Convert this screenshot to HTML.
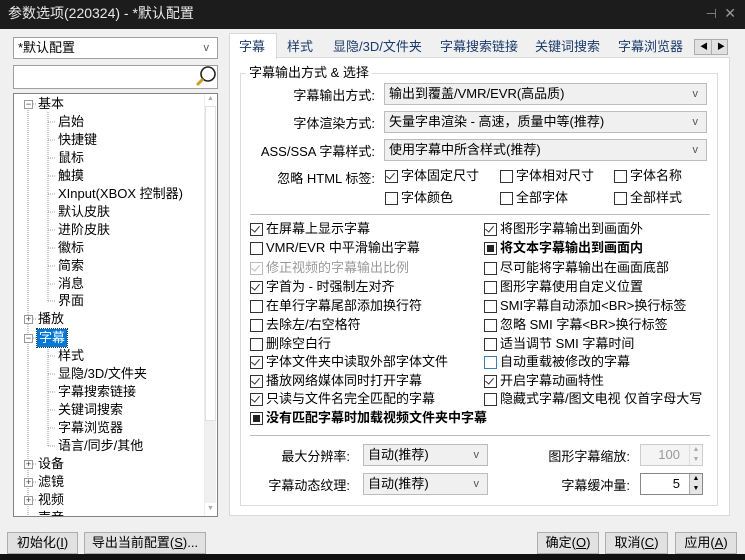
<!DOCTYPE html>
<html><head><meta charset="utf-8"><style>
*{box-sizing:border-box;margin:0;padding:0}
body{width:745px;height:560px;overflow:hidden;background:#f0f0f0;font-family:"Liberation Sans","Microsoft YaHei","Noto Sans CJK SC",sans-serif;font-size:13px;color:#000;position:relative}
.a{position:absolute;white-space:nowrap}
.title{left:0;top:0;width:745px;height:29px;background:#1c1c1c;color:#e8e8e8;font-size:14px;line-height:27px;padding-left:8px}
.combo{position:absolute;background:#fff;border:1px solid #a0a0a0;height:22px;line-height:20px;padding-left:4px}
.combo.g{background:#f0f0f0;border-color:#bcbcbc}
.combo .v{position:absolute;right:8px;top:0;font-size:11px;color:#555}
.tree{left:13px;top:93px;width:205px;height:424px;background:#fff;border:1px solid #828282;overflow:hidden}
.ti{position:absolute;line-height:18px;height:18px}
.btn{position:absolute;border:1px solid #adadad;background:#e1e1e1;height:22px;line-height:20px;text-align:center;font-size:13px}
.cb{position:absolute;line-height:19px;height:19px;padding-left:16px}
.cb:before{content:"";position:absolute;left:0;top:4px;width:11px;height:11px;border:1px solid #333;background:#fff}
.cb.c:after{content:"";position:absolute;left:3px;top:5px;width:4px;height:7px;border:solid #333;border-width:0 1.5px 1.5px 0;transform:rotate(40deg)}
.cb.s:after{content:"";position:absolute;left:3px;top:7px;width:7px;height:7px;background:#222}
.cb.b{font-weight:bold}
.cb.d{color:#999}.cb.d:before{border-color:#bbb}.cb.d:after{border-color:#bbb}
.cb.bl:before{border-color:#3c7fb1}
.tab{position:absolute;top:37px;height:20px;line-height:20px;color:#1a3a6a}
.ex{position:absolute;width:9px;height:9px;border:1px solid #999;background:#fff;font-size:9px;line-height:7px;text-align:center;color:#333}
</style></head><body>
<div class="a title">参数选项(220324) - *默认配置</div>
<div class="a" style="right:28px;top:6px;color:#888;font-size:13px">⊣</div>
<div class="a" style="right:9px;top:5px;color:#999;font-size:14px">✕</div>

<div class="combo" style="left:13px;top:37px;width:205px">*默认配置<span class="v">v</span></div>
<div class="combo" style="left:13px;top:65px;width:205px;height:24px"></div>
<svg class="a" style="left:194px;top:66px" width="24" height="22"><circle cx="14" cy="8" r="7" fill="#fff" stroke="#222" stroke-width="1.6"/><line x1="9" y1="13" x2="3" y2="19" stroke="#c8a020" stroke-width="3"/></svg>

<div class="a tree">
<svg class="a" style="left:0;top:0" width="200" height="424">
<g stroke="#999" stroke-dasharray="1 1" fill="none">
<line x1="14" y1="16" x2="14" y2="424"/>
<line x1="34" y1="18" x2="34" y2="207"/>
<line x1="34" y1="253" x2="34" y2="352"/>
</g>
<g stroke="#999" stroke-dasharray="1 1">
<line x1="34" y1="28" x2="42" y2="28"/><line x1="34" y1="46" x2="42" y2="46"/><line x1="34" y1="64" x2="42" y2="64"/><line x1="34" y1="82" x2="42" y2="82"/><line x1="34" y1="100" x2="42" y2="100"/><line x1="34" y1="118" x2="42" y2="118"/><line x1="34" y1="136" x2="42" y2="136"/><line x1="34" y1="154" x2="42" y2="154"/><line x1="34" y1="172" x2="42" y2="172"/><line x1="34" y1="190" x2="42" y2="190"/><line x1="34" y1="207" x2="42" y2="207"/>
<line x1="34" y1="262" x2="42" y2="262"/><line x1="34" y1="280" x2="42" y2="280"/><line x1="34" y1="298" x2="42" y2="298"/><line x1="34" y1="316" x2="42" y2="316"/><line x1="34" y1="334" x2="42" y2="334"/><line x1="34" y1="352" x2="42" y2="352"/>
<line x1="19" y1="10" x2="23" y2="10"/><line x1="19" y1="225" x2="23" y2="225"/><line x1="19" y1="244" x2="23" y2="244"/><line x1="19" y1="370" x2="23" y2="370"/><line x1="19" y1="388" x2="23" y2="388"/><line x1="19" y1="406" x2="23" y2="406"/>
</g></svg>
<div class="ex" style="left:10px;top:6px">−</div><div class="ti" style="left:24px;top:1px">基本</div>
<div class="ti" style="left:44px;top:19px">启始</div>
<div class="ti" style="left:44px;top:37px">快捷键</div>
<div class="ti" style="left:44px;top:55px">鼠标</div>
<div class="ti" style="left:44px;top:73px">触摸</div>
<div class="ti" style="left:44px;top:91px">XInput(XBOX 控制器)</div>
<div class="ti" style="left:44px;top:109px">默认皮肤</div>
<div class="ti" style="left:44px;top:127px">进阶皮肤</div>
<div class="ti" style="left:44px;top:145px">徽标</div>
<div class="ti" style="left:44px;top:163px">简索</div>
<div class="ti" style="left:44px;top:181px">消息</div>
<div class="ti" style="left:44px;top:198px">界面</div>
<div class="ex" style="left:10px;top:221px">+</div><div class="ti" style="left:24px;top:216px">播放</div>
<div class="ex" style="left:10px;top:240px">−</div><div class="ti" style="left:23px;top:235px;background:#0078d7;color:#fff;padding:0 2px;outline:1px dotted #333">字幕</div>
<div class="ti" style="left:44px;top:253px">样式</div>
<div class="ti" style="left:44px;top:271px">显隐/3D/文件夹</div>
<div class="ti" style="left:44px;top:289px">字幕搜索链接</div>
<div class="ti" style="left:44px;top:307px">关键词搜索</div>
<div class="ti" style="left:44px;top:325px">字幕浏览器</div>
<div class="ti" style="left:44px;top:343px">语言/同步/其他</div>
<div class="ex" style="left:10px;top:366px">+</div><div class="ti" style="left:24px;top:361px">设备</div>
<div class="ex" style="left:10px;top:384px">+</div><div class="ti" style="left:24px;top:379px">滤镜</div>
<div class="ex" style="left:10px;top:402px">+</div><div class="ti" style="left:24px;top:397px">视频</div>
<div class="ti" style="left:24px;top:415px">声音</div>
<div class="a" style="left:190px;top:0;width:13px;height:422px;background:#fff;border-left:1px solid #eee"></div>
<div class="a" style="left:191px;top:12px;width:11px;height:315px;background:#fff;border:1px solid #e0e0e0"></div>
<div class="a" style="left:191px;top:327px;width:11px;height:82px;background:#f0f0f0"></div>
<div class="a" style="left:193px;top:1px;font-size:7px;color:#aaa">▲</div>
<div class="a" style="left:193px;top:411px;font-size:7px;color:#aaa">▼</div>
</div>

<div class="btn" style="left:7px;top:532px;width:71px">初始化(<u>I</u>)</div>
<div class="btn" style="left:84px;top:532px;width:122px">导出当前配置(<u>S</u>)...</div>
<div class="btn" style="left:537px;top:532px;width:62px">确定(<u>O</u>)</div>
<div class="btn" style="left:605px;top:532px;width:63px">取消(<u>C</u>)</div>
<div class="btn" style="left:675px;top:532px;width:62px">应用(<u>A</u>)</div>
<div class="a" style="left:0;top:554px;width:745px;height:6px;background:#111"></div>

<div class="a" style="left:229px;top:57px;width:501px;height:459px;background:#fff;border:1px solid #d9d9d9"></div>
<div class="a" style="left:229px;top:33px;width:48px;height:26px;background:#fff;border:1px solid #d9d9d9;border-bottom:none"></div>
<div class="tab" style="left:239px;color:#1a3a6a">字幕</div>
<div class="tab" style="left:287px">样式</div>
<div class="tab" style="left:333px">显隐/3D/文件夹</div>
<div class="tab" style="left:440px">字幕搜索链接</div>
<div class="tab" style="left:535px">关键词搜索</div>
<div class="tab" style="left:618px">字幕浏览器</div>
<div class="a" style="left:694px;top:39px;width:34px;height:16px;border:1px solid #adadad;background:#e1e1e1"><span style="position:absolute;left:16px;top:0;width:1px;height:14px;background:#adadad"></span><span class="a" style="left:5px;top:1px;font-size:8px">◀</span><span class="a" style="left:22px;top:1px;font-size:8px">▶</span></div>

<div class="a" style="left:240px;top:73px;width:478px;height:433px;border:1px solid #dcdcdc"></div>
<div class="a" style="left:246px;top:64px;background:#fff;padding:0 3px;line-height:18px">字幕输出方式 &amp; 选择</div>

<div class="a" style="right:370px;top:85px">字幕输出方式:</div>
<div class="combo g" style="left:384px;top:83px;width:323px">输出到覆盖/VMR/EVR(高品质)<span class="v">v</span></div>
<div class="a" style="right:370px;top:113px">字体渲染方式:</div>
<div class="combo g" style="left:384px;top:111px;width:323px">矢量字串渲染 - 高速，质量中等(推荐)<span class="v">v</span></div>
<div class="a" style="right:370px;top:141px">ASS/SSA 字幕样式:</div>
<div class="combo g" style="left:384px;top:139px;width:323px">使用字幕中所含样式(推荐)<span class="v">v</span></div>
<div class="a" style="right:370px;top:168px">忽略 HTML 标签:</div>
<div class="cb c" style="left:385px;top:166px">字体固定尺寸</div>
<div class="cb" style="left:500px;top:166px">字体相对尺寸</div>
<div class="cb" style="left:614px;top:166px">字体名称</div>
<div class="cb" style="left:385px;top:188px">字体颜色</div>
<div class="cb" style="left:500px;top:188px">全部字体</div>
<div class="cb" style="left:614px;top:188px">全部样式</div>
<div class="a" style="left:250px;top:214px;width:460px;height:1px;background:#bbb"></div>

<div class="cb c" style="left:250px;top:219px">在屏幕上显示字幕</div>
<div class="cb" style="left:250px;top:238px">VMR/EVR 中平滑输出字幕</div>
<div class="cb c d" style="left:250px;top:258px">修正视频的字幕输出比例</div>
<div class="cb c" style="left:250px;top:277px">字首为 - 时强制左对齐</div>
<div class="cb" style="left:250px;top:296px">在单行字幕尾部添加换行符</div>
<div class="cb" style="left:250px;top:315px">去除左/右空格符</div>
<div class="cb" style="left:250px;top:334px">删除空白行</div>
<div class="cb c" style="left:250px;top:352px">字体文件夹中读取外部字体文件</div>
<div class="cb c" style="left:250px;top:371px">播放网络媒体同时打开字幕</div>
<div class="cb c" style="left:250px;top:389px">只读与文件名完全匹配的字幕</div>
<div class="cb s b" style="left:250px;top:408px">没有匹配字幕时加载视频文件夹中字幕</div>

<div class="cb c" style="left:484px;top:219px">将图形字幕输出到画面外</div>
<div class="cb s b" style="left:484px;top:238px">将文本字幕输出到画面内</div>
<div class="cb" style="left:484px;top:258px">尽可能将字幕输出在画面底部</div>
<div class="cb" style="left:484px;top:277px">图形字幕使用自定义位置</div>
<div class="cb" style="left:484px;top:296px">SMI字幕自动添加&lt;BR&gt;换行标签</div>
<div class="cb" style="left:484px;top:315px">忽略 SMI 字幕&lt;BR&gt;换行标签</div>
<div class="cb" style="left:484px;top:334px">适当调节 SMI 字幕时间</div>
<div class="cb bl" style="left:484px;top:352px">自动重载被修改的字幕</div>
<div class="cb c" style="left:484px;top:371px">开启字幕动画特性</div>
<div class="cb" style="left:484px;top:389px">隐藏式字幕/图文电视 仅首字母大写</div>

<div class="a" style="left:250px;top:435px;width:460px;height:1px;background:#bbb"></div>
<div class="a" style="right:395px;top:446px">最大分辨率:</div>
<div class="combo g" style="left:363px;top:444px;width:125px">自动(推荐)<span class="v">v</span></div>
<div class="a" style="right:395px;top:475px">字幕动态纹理:</div>
<div class="combo g" style="left:363px;top:473px;width:125px">自动(推荐)<span class="v">v</span></div>
<div class="a" style="right:115px;top:446px">图形字幕缩放:</div>
<div class="a" style="left:640px;top:444px;width:63px;height:22px;border:1px solid #ccc;background:#f4f4f4;color:#999;text-align:right;padding-right:22px;line-height:20px">100</div>
<div class="a" style="left:689px;top:445px;width:13px;height:20px;border-left:1px solid #ddd;font-size:7px;color:#aaa;line-height:10px;text-align:center">▲<br>▼</div>
<div class="a" style="right:115px;top:475px">字幕缓冲量:</div>
<div class="a" style="left:640px;top:473px;width:63px;height:22px;border:1px solid #888;background:#fff;text-align:right;padding-right:22px;line-height:20px">5</div>
<div class="a" style="left:689px;top:474px;width:13px;height:20px;border-left:1px solid #aaa;background:#e6e6e6;font-size:7px;line-height:10px;text-align:center">▲<br>▼</div>
</body></html>
